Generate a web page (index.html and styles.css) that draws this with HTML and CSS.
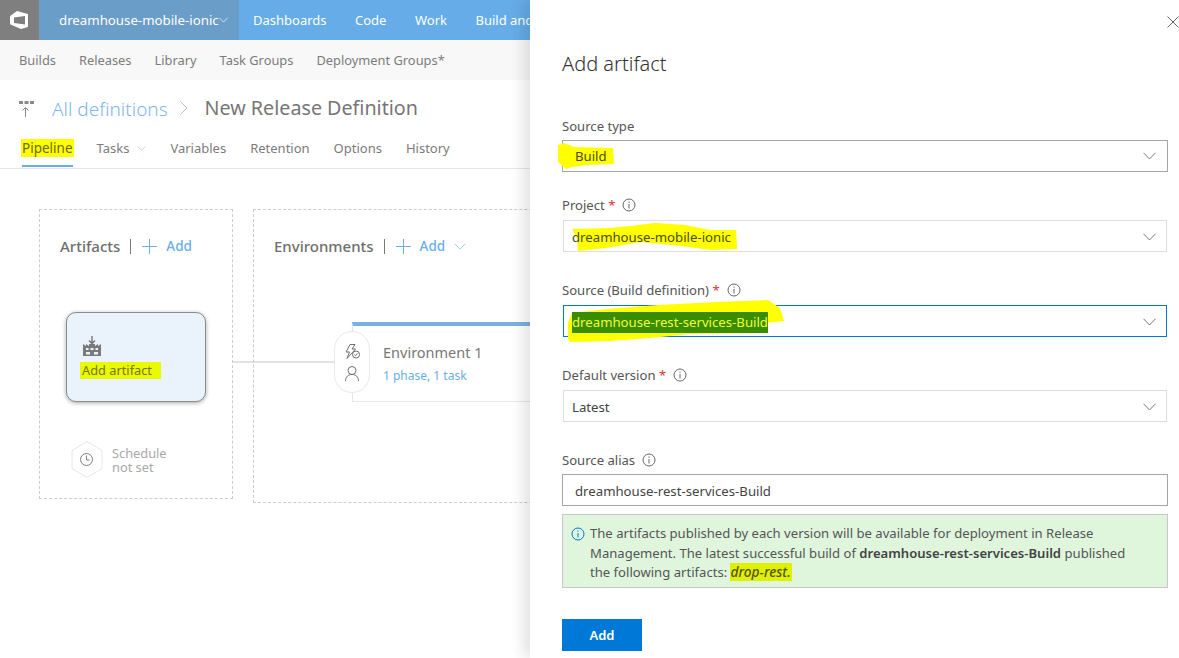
FILE: index.html
```html
<!DOCTYPE html>
<html>
	<head>
		<meta charset="UTF-8">
		<title>New Release Definition</title>
		<link rel="stylesheet" href="styles.css">
	</head>
	<body>
		<svg class="defs" width="0" height="0">
			<symbol id="chev" viewBox="0 0 13 8"><path d="M.5.8 6.5 7 12.500.8" fill="none" stroke="currentColor"/></symbol>
			<symbol id="info" viewBox="0 0 14 14"><circle cx="7" cy="7" r="6" fill="none" stroke="currentColor"/><path d="M7 6v4.500M7 3.500v1.300" stroke="currentColor" fill="none"/></symbol>
			<symbol id="plus" viewBox="0 0 15 15"><path d="M7.500 0v15M0 7.500h15" stroke="currentColor" fill="none"/></symbol>
		</svg>
		<div id="page">
			<div id="main">
				<div class="topbar">
					<div class="logo">
						<svg width="18" height="18" viewBox="0 0 18 18"><path fill="#fff" fill-rule="evenodd" d="M7 0 18 3v13l-7 2-7-3-3.500-1.500Q0 13 0 11.500V6Q0 4.500 1.500 4zM4 6.500V12l11 1.500V5z"/></svg>
					</div>
					<div class="project">
						<span>dreamhouse-mobile-ionic</span>
						<svg class="chev-top"><use href="#chev"/></svg>
					</div>
					<ul class="topnav">
						<li>Dashboards</li>
						<li>Code</li>
						<li>Work</li>
						<li>Build and</li>
					</ul>
				</div>
				<ul class="subnav">
					<li>Builds</li>
					<li>Releases</li>
					<li>Library</li>
					<li>Task Groups</li>
					<li>Deployment Groups*</li>
				</ul>
				<div class="titlebar">
					<svg class="rel-icon" width="15" height="16" viewBox="0 0 15 16">
						<path fill="#8a8a8a" d="M0 0h4v3H0zM5.500 0h4v3h-4zM11 0h4v3h-4z"/>
						<path d="M6.500 16V7M3.500 9.500l3-3 3 3" fill="none" stroke="#8a8a8a"/>
					</svg>
					<span class="crumb">All definitions</span>
					<svg class="crumb-sep" width="8" height="14" viewBox="0 0 8 14"><path d="M.5.500 7 7 .5 13.500" fill="none" stroke="#bdbdbd"/></svg>
					<span class="def-name">New Release Definition</span>
				</div>
				<ul class="tabs">
					<li class="tab-on"><span class="mark-tab">Pipeline</span></li>
					<li>Tasks<svg class="chev-tab"><use href="#chev"/></svg></li>
					<li>Variables</li>
					<li>Retention</li>
					<li>Options</li>
					<li>History</li>
				</ul>
				<div class="canvas">
					<div class="line"></div>
					<div class="lane lane-art">
						<div class="lane-head">
							<span class="lane-name">Artifacts</span>
							<i class="sep"></i>
							<svg class="plus"><use href="#plus"/></svg>
							<span class="lane-add">Add</span>
						</div>
						<div class="art-card">
							<svg class="art-icon" width="18" height="20" viewBox="0 0 18 20">
								<path d="M9 0v7M6 4.500 9 7.500l3-3" fill="none" stroke="#6d6d6d" stroke-width="1.300"/>
								<path fill="#7a7a7a" d="M0 20V8l3 2V8l3 2V8h6v2l3-2v2l3-2v12z"/>
								<path fill="#eaf3fb" d="M3 12h2.500v2H3zM7.500 12h3v2h-3zM12.500 12H15v2h-2.500zM3 16h4v2.500H3zM11 16h4v2.500h-4z"/>
							</svg>
							<div class="art-text"><span class="mark-art">Add artifact</span></div>
						</div>
						<div class="schedule">
							<svg width="32" height="37" viewBox="0 0 32 37">
								<path d="M16 .5 31 9.500v18l-15 9-15-9v-18z" fill="#fff" stroke="#e6e6e6"/>
								<circle cx="15.500" cy="18.500" r="6" fill="none" stroke="#7d7d7d"/>
								<path d="M15.500 14.500v4.500h3" fill="none" stroke="#7d7d7d"/>
							</svg>
							<div class="sched-text">
								<div>Schedule</div>
								<div>not set</div>
							</div>
						</div>
					</div>
					<div class="lane lane-env">
						<div class="lane-head">
							<span class="lane-name">Environments</span>
							<i class="sep"></i>
							<svg class="plus"><use href="#plus"/></svg>
							<span class="lane-add">Add</span>
							<svg class="chev-add"><use href="#chev"/></svg>
						</div>
						<div class="env-card">
							<div class="pill">
								<svg width="15" height="15" viewBox="0 0 15 15" fill="none" stroke="#6f6f6f">
									<path d="M5 .5h5L7 5h3.500L2 14.500 4.500 8H1z"/>
									<circle cx="11" cy="10.500" r="3.500" fill="#fff"/>
									<path d="m9.300 10.500 1.300 1.200 2-2.200"/>
								</svg>
								<svg width="14" height="15" viewBox="0 0 14 15" fill="none" stroke="#6f6f6f">
									<circle cx="7" cy="4.500" r="4"/>
									<path d="M.5 15C.5 11 3 8.500 7 8.500s6.500 2.500 6.500 6.500"/>
								</svg>
							</div>
							<div class="env-name">Environment 1</div>
							<div class="env-sub">1 phase, 1 task</div>
						</div>
					</div>
				</div>
			</div>
			<div id="panel">
				<div class="panel-top">
					<svg width="12" height="12" viewBox="0 0 12 12"><path d="M.5.500l11 11M11.500.500l-11 11" stroke="#666" fill="none"/></svg>
				</div>
				<h1 class="panel-title">Add artifact</h1>

				<div class="field field-first">
					<div class="label">Source type</div>
					<div class="box box-strong">
						<span class="hl">
							<svg class="swash swash-build" width="56" height="26" viewBox="0 0 56 26"><path fill="#ff0" d="M0 2 6 0l10 4 39 1 1 16-26 1-16 2-6 2-8-7z"/></svg>
							Build
						</span>
						<svg class="chev"><use href="#chev"/></svg>
					</div>
				</div>

				<div class="field">
					<div class="label">Project <em>*</em><svg class="info"><use href="#info"/></svg></div>
					<div class="box box-soft">
						<span class="hl">
							<svg class="swash swash-proj" width="168" height="30" viewBox="0 0 168 30"><path fill="#ff0" d="M2 7 40 6 60 4 85 1l30 2 25 5 26 0 1 19-26 1-30-4-40-4-35 6-28 3-1-12z"/></svg>
							dreamhouse-mobile-ionic
						</span>
						<svg class="chev"><use href="#chev"/></svg>
					</div>
				</div>

				<div class="field">
					<div class="label">Source (Build definition) <em>*</em><svg class="info"><use href="#info"/></svg></div>
					<div class="box box-soft box-focus">
						<span class="hl hl-sel">
							<svg class="swash swash-src" width="220" height="42" viewBox="0 0 220 42"><path fill="#ff0" d="M4 13 40 9l50-4 60-3 50-2 12 8 4 13-20 2-4 10-70 1-40 4-40 3-40 1-6-10z"/></svg>
							<span class="sel">dreamhouse-rest-services-Build</span>
						</span>
						<svg class="chev"><use href="#chev"/></svg>
					</div>
				</div>

				<div class="field">
					<div class="label">Default version <em>*</em><svg class="info"><use href="#info"/></svg></div>
					<div class="box box-soft">
						<span>Latest</span>
						<svg class="chev"><use href="#chev"/></svg>
					</div>
				</div>

				<div class="field field-alias">
					<div class="label">Source alias<svg class="info"><use href="#info"/></svg></div>
					<div class="box box-strong box-alias"><span>dreamhouse-rest-services-Build</span></div>
				</div>

				<div class="note">
					<svg class="note-icon"><use href="#info"/></svg>
					<p>The artifacts published by each version will be available for deployment in Release<br>Management. The latest successful build of <b>dreamhouse-rest-services-Build</b> published<br>the following artifacts: <span class="mark-drop">drop-rest.</span></p>
				</div>

				<button class="add-btn">Add</button>
			</div>
		</div>
	</body>
</html>
```

FILE: styles.css
```css
*{
	margin: 0;
	padding: 0;
	border: none;
	box-sizing: border-box;
}
ul,li{
	list-style: none;
}
html,body{
	height: 100%;
	overflow: hidden;
}
body{
	font-family: "Noto Sans", "Open Sans", sans-serif;
	font-size: 13.100px;
	color: #333;
	background: #fff;
}
.defs{
	position: absolute;
}
#page{
	display: flex;
	width: 1179px;
	height: 658px;
}

/* left side */
#main{
	width: 530px;
	height: 658px;
	overflow: hidden;
	flex: none;
}
.topbar{
	display: flex;
	height: 40px;
	width: 530px;
	background: #65ace8;
	color: #fff;
	font-size: 13px;
}
.logo{
	flex: none;
	width: 39px;
	background: #7f7f7f;
	display: flex;
	align-items: center;
	padding-left: 10px;
}
.project{
	flex: none;
	width: 200px;
	background: #6a9dc7;
	display: flex;
	align-items: center;
	padding-left: 20px;
	font-size: 13.250px;
}
.chev-top{
	width: 9px;
	height: 6px;
	color: #fff;
}
.topnav{
	display: flex;
	align-items: center;
	gap: 28.500px;
	padding-left: 14px;
	white-space: nowrap;
}
.subnav{
	display: flex;
	align-items: center;
	gap: 23px;
	height: 40px;
	padding-left: 19px;
	background: #f8f8f8;
	color: #7c7c7c;
	font-size: 12.850px;
}
.titlebar{
	display: flex;
	align-items: center;
	height: 55px;
	padding-left: 19px;
	white-space: nowrap;
}
.rel-icon{
	margin-right: 18px;
	margin-top: 2px;
}
.crumb{
	font-size: 19px;
	font-weight: 300;
	color: #7db6ec;
	margin-top: 3px;
}
.crumb-sep{
	margin: 0 17px 0 12px;
}
.def-name{
	font-size: 19.700px;
	color: #767676;
}
.tabs{
	display: flex;
	gap: 24px;
	height: 34px;
	padding-left: 22px;
	border-bottom: 1px solid #e6e6e6;
	color: #7c7c7c;
	font-size: 13px;
	line-height: 26px;
}
.tab-on{
	height: 32px;
	font-size: 13.500px;
	border-bottom: 2px solid #65ace8;
}
.mark-tab{
	display: inline-block;
	background: #ff0;
	color: #6b6b00;
	line-height: 18px;
	margin: 0 -1px;
	padding: 0 1px;
}
.chev-tab{
	width: 9px;
	height: 5px;
	margin: 0 0 2px 8px;
	color: #b5b5b5;
}
.canvas{
	position: relative;
	display: flex;
	align-items: flex-start;
	gap: 20px;
	padding: 40px 0 0 39px;
	width: 700px;
}
.line{
	position: absolute;
	left: 233px;
	top: 192px;
	width: 110px;
	height: 2px;
	background: #e3e3e3;
}
.lane{
	position: relative;
	border: 1px dashed #ccc;
	flex: none;
}
.lane-art{
	width: 194px;
	height: 290px;
}
.lane-env{
	width: 420px;
	height: 294px;
}
.lane-head{
	display: flex;
	align-items: center;
	height: 20px;
	margin-top: 26px;
	padding-left: 20px;
}
.lane-name{
	font-size: 15px;
	font-weight: 500;
	color: #6e6e6e;
}
.sep{
	width: 1px;
	height: 15px;
	margin: 0 11px 0 10px;
	background: #777;
}
.plus{
	width: 15px;
	height: 15px;
	margin-right: 9px;
	color: #6aaee8;
}
.lane-add{
	font-size: 13.500px;
	font-weight: 500;
	color: #6aaee8;
}
.chev-add{
	width: 12px;
	height: 7px;
	margin-left: 9px;
	color: #9cc6ec;
}
.art-card{
	width: 140px;
	height: 90px;
	margin: 56px 0 0 26px;
	padding: 23px 15px 0;
	background: #eaf3fb;
	border: 1px solid #8c8c8c;
	border-radius: 10px;
	box-shadow: 0 1px 4px rgba(0,0,0,.35);
}
.art-icon{
	display: block;
	margin-left: 1px;
}
.art-text{
	margin-top: 5px;
}
.mark-art{
	display: inline-block;
	width: 81px;
	margin-left: -2px;
	padding-left: 2px;
	background: #e9f900;
	color: #777700;
	font-size: 12.800px;
	line-height: 17px;
	white-space: nowrap;
}
.schedule{
	display: flex;
	align-items: center;
	gap: 9px;
	margin: 39px 0 0 31px;
}
.sched-text{
	font-size: 12.800px;
	line-height: 14px;
	color: #a8a8a8;
}
.env-card{
	position: relative;
	margin: 66px 0 0 98px;
	height: 80px;
	padding: 17px 0 0 30px;
	border-top: 4px solid #7ab1e2;
	border-left: 1px solid #e6e6e6;
	border-bottom: 1px solid #e6e6e6;
	white-space: nowrap;
}
.pill{
	position: absolute;
	left: -19px;
	top: 5px;
	width: 36px;
	height: 62px;
	display: flex;
	flex-direction: column;
	align-items: center;
	justify-content: center;
	gap: 7px;
	background: #fff;
	border: 1px solid #e8e8e8;
	border-radius: 18px;
}
.env-name{
	font-size: 14.500px;
	line-height: 18px;
	color: #777;
}
.env-sub{
	font-size: 12px;
	line-height: 18px;
	margin-top: 6px;
	color: #6aaee8;
}

/* right side */
#panel{
	width: 649px;
	height: 658px;
	flex: none;
	padding: 0 11px 0 32px;
	background: #fff;
	box-shadow: -6px 0 14px rgba(0,0,0,.12);
	position: relative;
}
.panel-top{
	display: flex;
	justify-content: flex-end;
	height: 16px;
	margin-right: -11px;
	padding-top: 16px;
	box-sizing: content-box;
}
.panel-title{
	font-size: 20px;
	font-weight: 300;
	line-height: 26px;
	margin-top: 19px;
	margin-bottom: 39px;
	color: #333;
}
.field{
	margin-bottom: 28px;
}
.field-first{
	margin-bottom: 23px;
}
.field-alias{
	margin-bottom: 8px;
}
.label{
	display: flex;
	align-items: center;
	height: 20px;
	margin-bottom: 5px;
	color: #555;
	white-space: pre;
}
.field-first .label,
.field-alias .label{
	margin-bottom: 4px;
}
.label em{
	color: #d13438;
	font-style: normal;
}
.info{
	width: 14px;
	height: 14px;
	margin-left: 7px;
	color: #666;
}
.box{
	position: relative;
	display: flex;
	align-items: center;
	justify-content: space-between;
	height: 32px;
	background: #fff;
	font-size: 13.200px;
}
.box-strong{
	border: 1px solid #a6a6a6;
	padding: 0 11px 0 12px;
	color: #444;
}
.box-alias{
	padding-top: 1px;
}
.box-soft{
	border: 1px solid #ddd;
	margin: 0 1px;
	padding: 2px 10px 0 8px;
	color: #444;
}
.box-focus{
	border-color: #0078d7;
}
.chev{
	width: 13px;
	height: 8px;
	color: #777;
}
.hl{
	position: relative;
	z-index: 0;
	color: #4c4c00;
}
.swash{
	position: absolute;
	z-index: -1;
}
.swash-build{
	left: -17px;
	top: -4px;
}
.swash-proj{
	left: -2px;
	top: -6px;
}
.swash-src{
	left: -4px;
	top: -12px;
}
.sel{
	display: inline-block;
	background: #3a8c00;
	color: #eeff30;
	line-height: 21px;
}
.note{
	display: flex;
	height: 74px;
	padding: 9px 8px 0;
	background: #dff6dd;
	border: 1px solid #c8c8c8;
	color: #555;
	line-height: 19.500px;
	white-space: nowrap;
}
.note-icon{
	flex: none;
	width: 14px;
	height: 14px;
	margin: 3px 5px 0 0;
	color: #0078d7;
}
.note b{
	font-weight: 600;
	color: #444;
}
.mark-drop{
	display: inline-block;
	background: #dff000;
	color: #555500;
	font-size: 13.700px;
	font-style: italic;
	font-weight: 500;
	line-height: 18px;
	padding: 0 1px;
	margin-left: -1px;
}
.add-btn{
	display: block;
	width: 80px;
	height: 32px;
	margin-top: 31px;
	background: #0078d7;
	color: #fff;
	font: 600 13px "Noto Sans", "Open Sans", sans-serif;
}
```
